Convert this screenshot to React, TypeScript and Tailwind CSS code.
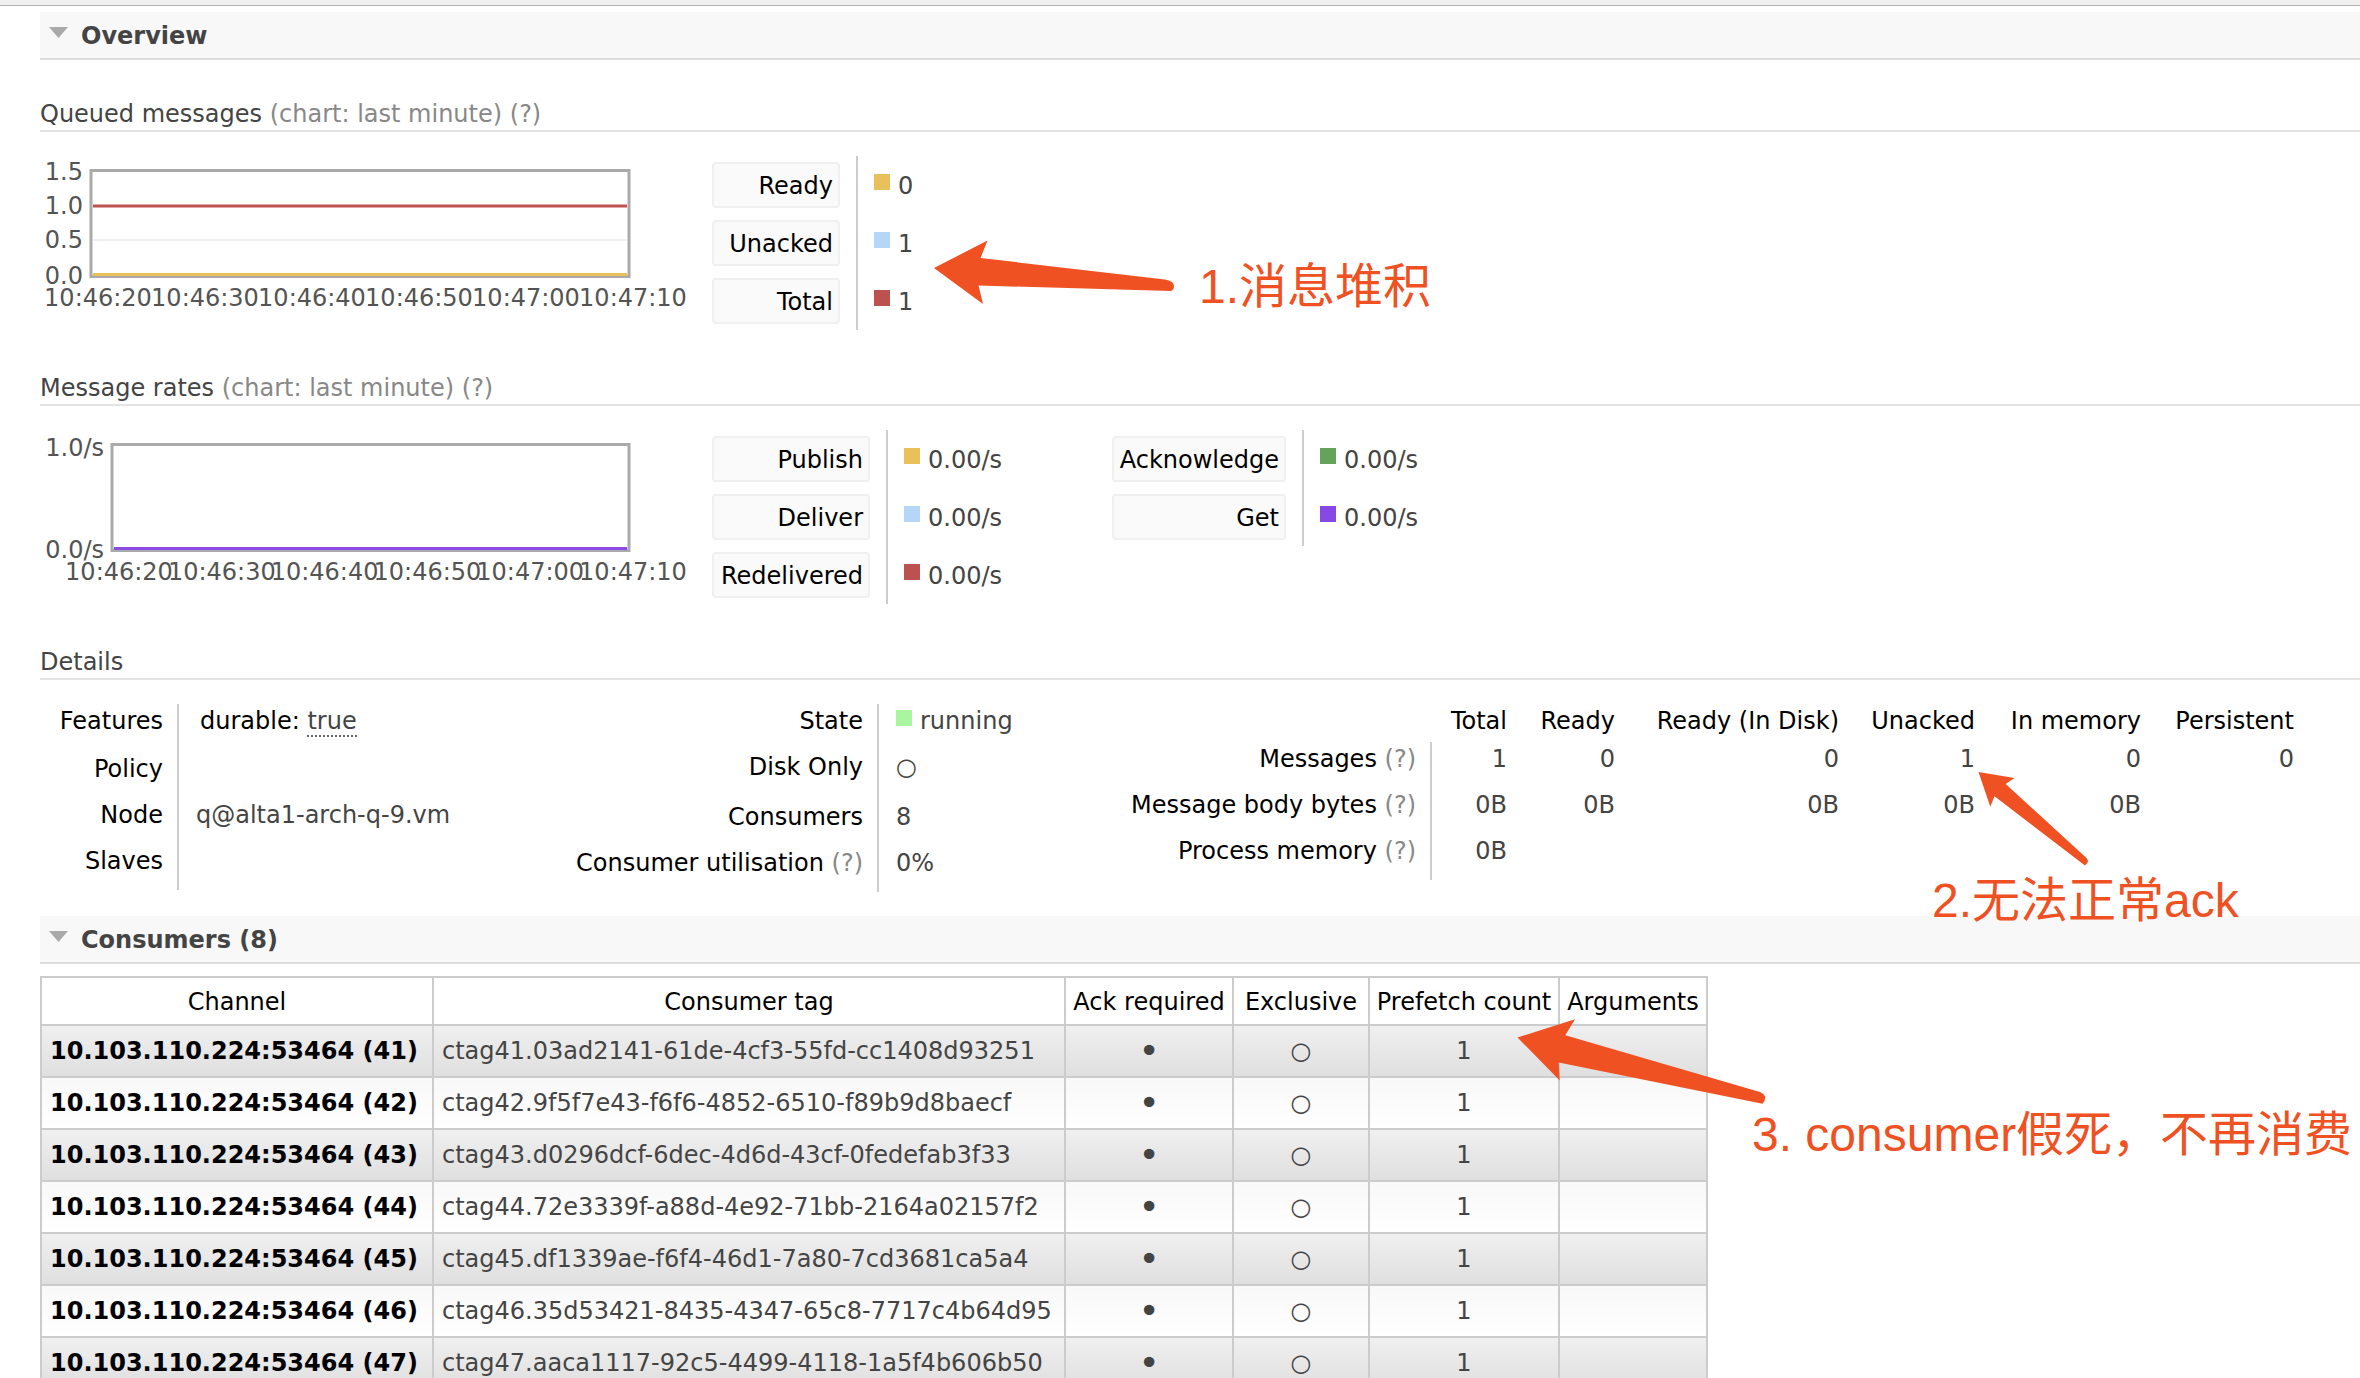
import type { ReactNode } from "react";

const consumers = [
  { id: 41, tag: "ctag41.03ad2141-61de-4cf3-55fd-cc1408d93251" },
  { id: 42, tag: "ctag42.9f5f7e43-f6f6-4852-6510-f89b9d8baecf" },
  { id: 43, tag: "ctag43.d0296dcf-6dec-4d6d-43cf-0fedefab3f33" },
  { id: 44, tag: "ctag44.72e3339f-a88d-4e92-71bb-2164a02157f2" },
  { id: 45, tag: "ctag45.df1339ae-f6f4-46d1-7a80-7cd3681ca5a4" },
  { id: 46, tag: "ctag46.35d53421-8435-4347-65c8-7717c4b64d95" },
  { id: 47, tag: "ctag47.aaca1117-92c5-4499-4118-1a5f4b606b50" },
];

const times = ["10:46:20", "10:46:30", "10:46:40", "10:46:50", "10:47:00", "10:47:10"];

function SectionBar({ children }: { children: ReactNode }) {
  return (
    <h2 className="border-b-2 border-[#ddd] bg-[#f8f8f8] font-bold text-[#444]">
      <button type="button" className="flex h-[46px] w-full items-start pl-[9px] text-left leading-[48px]">
        <svg className="mt-[15px] mr-[13px] h-[11px] w-[19px]" viewBox="0 0 19 11" aria-hidden="true">
          <path d="M0 0H19L9.5 11Z" fill="#aaa" />
        </svg>
        {children}
      </button>
    </h2>
  );
}

function Help() {
  return (
    <a href="#help" className="text-[#888]">
      (?)
    </a>
  );
}

function SubHeading({ title, chart }: { title: string; chart?: boolean }) {
  return (
    <h3 className="border-b-2 border-[#e4e4e4] pb-0.5 leading-7">
      {title}
      {chart && (
        <>
          {" "}
          <span className="text-[#888]">(chart: last minute)</span> <Help />
        </>
      )}
    </h3>
  );
}

type Label = { text: string; y: number };

function Chart({
  name,
  left,
  labels,
  children,
}: {
  name: string;
  left: number;
  labels: Label[];
  children: ReactNode;
}) {
  const first = left + 8;
  const step = (593 - first) / 5;
  return (
    <svg className="h-[174px] w-[672px] shrink-0 text-2xl" viewBox="0 0 672 174" role="img" aria-label={name}>
      <rect x={left + 1} y={14.5} width={588 - left} height={106} fill="#fff" stroke="#aaa" strokeWidth={3} />
      {children}
      {labels.map((l) => (
        <text key={l.text} x={left - 7} y={l.y} textAnchor="end" fill="#545454">
          {l.text}
        </text>
      ))}
      {times.map((t, i) => (
        <text key={t} x={first + i * step} y={150} textAnchor="middle" fill="#545454">
          {t}
        </text>
      ))}
    </svg>
  );
}

type Entry = { label: string; value: string; color: string };

function Legend({ width, entries }: { width: string; entries: Entry[] }) {
  return (
    <div className="flex items-start">
      <div className={`flex flex-col gap-3 py-1.5 ${width}`}>
        {entries.map((e) => (
          <button
            key={e.label}
            type="button"
            className="h-[46px] rounded border-2 border-[#f0f0f0] bg-[#fafafa] pt-0.5 pr-[5px] text-right text-black"
          >
            {e.label}
          </button>
        ))}
      </div>
      <div className="ml-4 flex flex-col gap-3 border-l-2 border-[#ccc] py-1.5 pl-4">
        {entries.map((e) => (
          <div key={e.label} className="flex h-[46px] items-start gap-2 leading-[48px]">
            <span className={`mt-3 size-4 ${e.color}`} />
            {e.value}
          </div>
        ))}
      </div>
    </div>
  );
}

function Row({ label, height, help, children }: { label: string; height: string; help?: boolean; children?: ReactNode }) {
  return (
    <tr className={height}>
      <th scope="row" className="pt-[3px] pr-3.5 text-right align-top font-normal text-black">
        {label}
        {help && (
          <>
            {" "}
            <Help />
          </>
        )}
      </th>
      <td className="border-l-2 border-[#ccc] pt-[3px] pl-[17px] align-top">{children}</td>
    </tr>
  );
}

const sizeHeads = [
  { name: "Total", width: "w-[76px]" },
  { name: "Ready", width: "w-[108px]" },
  { name: "Ready (In Disk)", width: "w-[224px]" },
  { name: "Unacked", width: "w-[136px]" },
  { name: "In memory", width: "w-[166px]" },
  { name: "Persistent", width: "w-[153px]" },
];

const sizeRows = [
  { name: "Messages", cells: ["1", "0", "0", "1", "0", "0"] },
  { name: "Message body bytes", cells: ["0B", "0B", "0B", "0B", "0B", ""] },
  { name: "Process memory", cells: ["0B", "", "", "", "", ""] },
];

const consumerHeads = [
  { name: "Channel", width: "w-[392px]" },
  { name: "Consumer tag", width: "w-[632px]" },
  { name: "Ack required", width: "w-[168px]" },
  { name: "Exclusive", width: "w-[136px]" },
  { name: "Prefetch count", width: "w-[190px]" },
  { name: "Arguments", width: "w-[148px]" },
];

function Note({ className, children }: { className: string; children: ReactNode }) {
  return (
    <p
      className={`absolute font-['Liberation_Sans','Noto_Sans_CJK_SC',sans-serif] text-5xl leading-[56px] whitespace-nowrap text-[#f05123] ${className}`}
    >
      {children}
    </p>
  );
}

export default function App() {
  return (
    <div className="relative h-screen overflow-hidden bg-white font-['DejaVu_Sans',Verdana,sans-serif] text-2xl leading-7 text-[#444]">
      <div className="h-1.5 border-b border-[#b0b0b0] bg-[#f0f0f0]" />
      <main className="pt-1.5 pl-10">
        <SectionBar>Overview</SectionBar>

        <section className="mt-10">
          <SubHeading title="Queued messages" chart />
          <div className="mt-6 flex">
            <Chart
              name="Queued messages"
              left={50}
              labels={[
                { text: "1.5", y: 24 },
                { text: "1.0", y: 58 },
                { text: "0.5", y: 92 },
                { text: "0.0", y: 128 },
              ]}
            >
              <path d="M53 84H587" stroke="#f0f0f0" strokeWidth={2} />
              <path d="M53 50H587" stroke="#be5350" strokeWidth={3} />
              <path d="M53 118.500H587" stroke="#e8c15b" strokeWidth={3} />
            </Chart>
            <Legend
              width="w-32"
              entries={[
                { label: "Ready", value: "0", color: "bg-[#e8c15b]" },
                { label: "Unacked", value: "1", color: "bg-[#b5d6f6]" },
                { label: "Total", value: "1", color: "bg-[#bb524f]" },
              ]}
            />
          </div>
        </section>

        <section className="mt-11">
          <SubHeading title="Message rates" chart />
          <div className="mt-6 flex">
            <Chart
              name="Message rates"
              left={71}
              labels={[
                { text: "1.0/s", y: 26 },
                { text: "0.0/s", y: 128 },
              ]}
            >
              <path d="M74 118.500H587" stroke="#8a4be6" strokeWidth={3} />
            </Chart>
            <div className="w-[400px]">
              <Legend
                width="w-[158px]"
                entries={[
                  { label: "Publish", value: "0.00/s", color: "bg-[#e8c15b]" },
                  { label: "Deliver", value: "0.00/s", color: "bg-[#b5d6f6]" },
                  { label: "Redelivered", value: "0.00/s", color: "bg-[#bb524f]" },
                ]}
              />
            </div>
            <Legend
              width="w-[174px]"
              entries={[
                { label: "Acknowledge", value: "0.00/s", color: "bg-[#66a35a]" },
                { label: "Get", value: "0.00/s", color: "bg-[#8748e6]" },
              ]}
            />
          </div>
        </section>

        <section className="mt-11">
          <SubHeading title="Details" />
          <div className="mt-6 flex items-start">
            <div className="w-[520px] shrink-0">
              <table>
                <colgroup>
                  <col className="w-[138px]" />
                  <col />
                </colgroup>
                <tbody>
                  <Row label="Features" height="h-12">
                    <span className="pl-1 text-black">durable:</span>{" "}
                    <abbr title="true" className="border-b-2 border-dotted border-[#666] no-underline">
                      true
                    </abbr>
                  </Row>
                  <Row label="Policy" height="h-[46px]" />
                  <Row label="Node" height="h-[46px]">
                    q@alta1-arch-q-9.vm
                  </Row>
                  <Row label="Slaves" height="h-[46px]" />
                </tbody>
              </table>
            </div>
            <div className="w-[540px] shrink-0">
              <table>
                <colgroup>
                  <col className="w-[318px]" />
                  <col />
                </colgroup>
                <tbody>
                  <Row label="State" height="h-[46px]">
                    <div className="flex items-start gap-2">
                      <span className="mt-[3px] size-4 bg-[#aaf5a0]" />
                      running
                    </div>
                  </Row>
                  <Row label="Disk Only" height="h-[50px]">
                    ○
                  </Row>
                  <Row label="Consumers" height="h-[46px]">
                    8
                  </Row>
                  <Row label="Consumer utilisation" height="h-[46px]" help>
                    0%
                  </Row>
                </tbody>
              </table>
            </div>
            <table className="w-[1193px] shrink-0 table-fixed text-right">
              <thead>
                <tr className="h-[38px]">
                  <td className="w-[331px]" />
                  {sizeHeads.map((h) => (
                    <th key={h.name} scope="col" className={`pt-[3px] text-right align-top font-normal text-black ${h.width}`}>
                      {h.name}
                    </th>
                  ))}
                </tr>
              </thead>
              <tbody>
                {sizeRows.map((r) => (
                  <tr key={r.name} className="h-[46px]">
                    <th scope="row" className="border-r-2 border-[#ccc] pt-[3px] pr-3.5 text-right align-top font-normal text-black">
                      {r.name} <Help />
                    </th>
                    {r.cells.map((c, i) => (
                      <td key={i} className="pt-[3px] align-top">
                        {c}
                      </td>
                    ))}
                  </tr>
                ))}
              </tbody>
            </table>
          </div>
        </section>

        <section className="mt-6">
          <SectionBar>Consumers (8)</SectionBar>
          <table className="mt-3 w-[1668px] table-fixed border-collapse border-2 border-[#ccc] whitespace-nowrap">
            <thead>
              <tr className="h-12">
                {consumerHeads.map((h) => (
                  <th key={h.name} scope="col" className={`border-2 border-[#ccc] pt-0.5 text-center font-normal text-black ${h.width}`}>
                    {h.name}
                  </th>
                ))}
              </tr>
            </thead>
            <tbody>
              {consumers.map((c) => (
                <tr key={c.id} className="h-[52px] bg-linear-to-b odd:from-[#f0f0f0] odd:to-[#dfdfdf] even:from-[#f8f8f8] even:to-white">
                  <td className="border-2 border-[#ccc] px-2 font-bold text-black">
                    <a href={`#channel-${c.id}`}>10.103.110.224:53464 ({c.id})</a>
                  </td>
                  <td className="border-2 border-[#ccc] px-2">{c.tag}</td>
                  <td className="border-2 border-[#ccc] text-center text-4xl leading-none">•</td>
                  <td className="border-2 border-[#ccc] text-center">○</td>
                  <td className="border-2 border-[#ccc] text-center">1</td>
                  <td className="border-2 border-[#ccc]" />
                </tr>
              ))}
            </tbody>
          </table>
        </section>
      </main>

      <svg className="pointer-events-none absolute top-0 left-0 h-[1378px] w-[2360px]" viewBox="0 0 2360 1378" fill="#f05123" aria-hidden="true">
        <path d="M934 268L987.500 240.500L980.500 258L1165 279.500Q1174 281 1174 286Q1174 290 1171 291L978.500 285.500L983 304Z" />
        <path d="M1978.500 772L2014.500 778L2005.700 784L2086.500 858Q2090 862 2085 865.500L1994.500 796.300L1990.300 806.700Z" />
        <path d="M1517.500 1037.500L1575 1019.300L1565.300 1035.300L1760 1092Q1769 1096 1762.500 1103.700L1558.700 1062.500L1559.700 1080.500Z" />
      </svg>
      <Note className="top-[259px] left-[1199px]">1.消息堆积</Note>
      <Note className="top-[873px] left-[1932px]">2.无法正常ack</Note>
      <Note className="top-[1107px] left-[1752px]">3. consumer假死，不再消费</Note>
    </div>
  );
}
